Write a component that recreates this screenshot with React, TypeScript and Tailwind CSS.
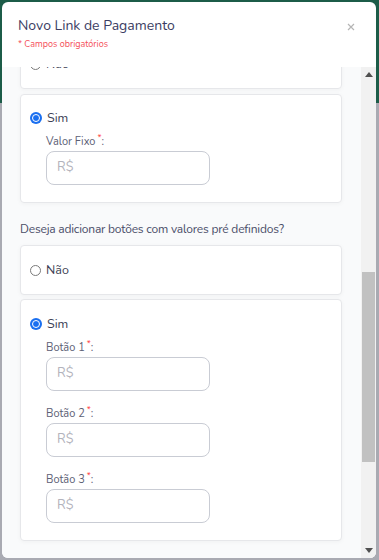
import React from "react";

const font = { fontFamily: '"Nunito", "Lato", "Open Sans", sans-serif' };

function Radio({ checked }: { checked?: boolean }) {
  if (checked) {
    return (
      <div className="w-[12px] h-[12px] rounded-full bg-[#1a6ff0] flex items-center justify-center shrink-0">
        <div className="w-[8px] h-[8px] rounded-full border-[1.5px] border-white bg-[#1a6ff0]" />
      </div>
    );
  }
  return <div className="w-[11px] h-[11px] rounded-full border border-[#7a7a7a] bg-white shrink-0" />;
}

function RadioRow({ label, checked }: { label: string; checked?: boolean }) {
  return (
    <div className="flex items-center h-[20px] gap-[5px]">
      <Radio checked={checked} />
      <span className="text-[12.5px] text-[#3d3f55]">{label}</span>
    </div>
  );
}

function Field({ label, first }: { label: string; first?: boolean }) {
  return (
    <div className={first ? "mt-[7px]" : "mt-[16px]"}>
      <div className="h-[14px] text-[11px] leading-[14px] text-[#5c6075] flex items-start">
        <span>{label}</span>
        <span className="text-[#ff3b3b] text-[9px] leading-[9px] ml-[2px] -mt-[1px]">*</span>
        <span>:</span>
      </div>
      <div className="mt-[2px] w-[164px] h-[34px] rounded-[8px] border border-[#c9ccd4] bg-white flex items-center pl-[10px]">
        <span className="text-[13px] text-[#b3b3bc]">R$</span>
      </div>
    </div>
  );
}

function Card({ children, className = "" }: { children: React.ReactNode; className?: string }) {
  return (
    <div
      className={
        "bg-white border border-[#e6e7ea] rounded-[4px] shadow-[0_1px_4px_rgba(0,0,0,0.04)] pl-[9px] " +
        className
      }
    >
      {children}
    </div>
  );
}

export default function App() {
  return (
    <div className="relative w-[379px] h-[560px] bg-[#a9aab2] overflow-hidden" style={font}>
      <div className="absolute left-0 top-0 w-full h-[103px] bg-[#1c5c48]" />
      <div className="absolute left-[2px] top-[2px] w-[374px] h-[556px] bg-white rounded-[6px] overflow-hidden flex flex-col">
        {/* header */}
        <div className="h-[65px] shrink-0 relative pl-[16px] pt-[14px]">
          <div className="text-[14px] leading-[19px] text-[#3b3d62]">Novo Link de Pagamento</div>
          <div className="text-[9px] leading-[13px] text-[#f5505a] mt-[3px]">* Campos obrigatórios</div>
          <svg
            className="absolute right-[21px] top-[21px]"
            width="8"
            height="8"
            viewBox="0 0 8 8"
          >
            <path d="M1 1L7 7M7 1L1 7" stroke="#b5b5b5" strokeWidth="1.2" />
          </svg>
        </div>
        {/* body */}
        <div className="flex-1 flex min-h-0 bg-[#f9fafb]">
          <div className="flex-1 overflow-hidden pl-[18px] pr-[19px]">
            <div className="-mt-[28px]">
              <Card className="pt-[14px] pb-[14px]">
                <RadioRow label="Não" />
              </Card>
              <Card className="mt-[5px] pt-[13px] pb-[17px]">
                <RadioRow label="Sim" checked />
                <div className="pl-[16px]">
                  <Field label="Valor Fixo " first />
                </div>
              </Card>
              <div className="mt-[17px] mb-[7px] text-[12px] leading-[18px] tracking-[-0.2px] text-[#4a4d68]">
                Deseja adicionar botões com valores pré definidos?
              </div>
              <Card className="pt-[14px] pb-[14px]">
                <RadioRow label="Não" />
              </Card>
              <Card className="mt-[4px] pt-[14px] pb-[17px]">
                <RadioRow label="Sim" checked />
                <div className="pl-[16px]">
                  <Field label="Botão 1 " first />
                  <Field label="Botão 2 " />
                  <Field label="Botão 3 " />
                </div>
              </Card>
            </div>
          </div>
          {/* scrollbar */}
          <div className="w-[15px] shrink-0 bg-[#f1f1f1] flex flex-col items-center">
            <div className="h-[15px] w-full flex items-center justify-center">
              <svg width="8" height="5" viewBox="0 0 8 5">
                <path d="M4 0L8 5H0Z" fill="#505050" />
              </svg>
            </div>
            <div className="flex-1 w-full flex flex-col px-[1px]">
              <div className="h-[190px] mt-[190px] w-full bg-[#c1c1c1]" />
            </div>
            <div className="h-[15px] w-full flex items-center justify-center">
              <svg width="8" height="5" viewBox="0 0 8 5">
                <path d="M0 0H8L4 5Z" fill="#505050" />
              </svg>
            </div>
          </div>
        </div>
      </div>
    </div>
  );
}
